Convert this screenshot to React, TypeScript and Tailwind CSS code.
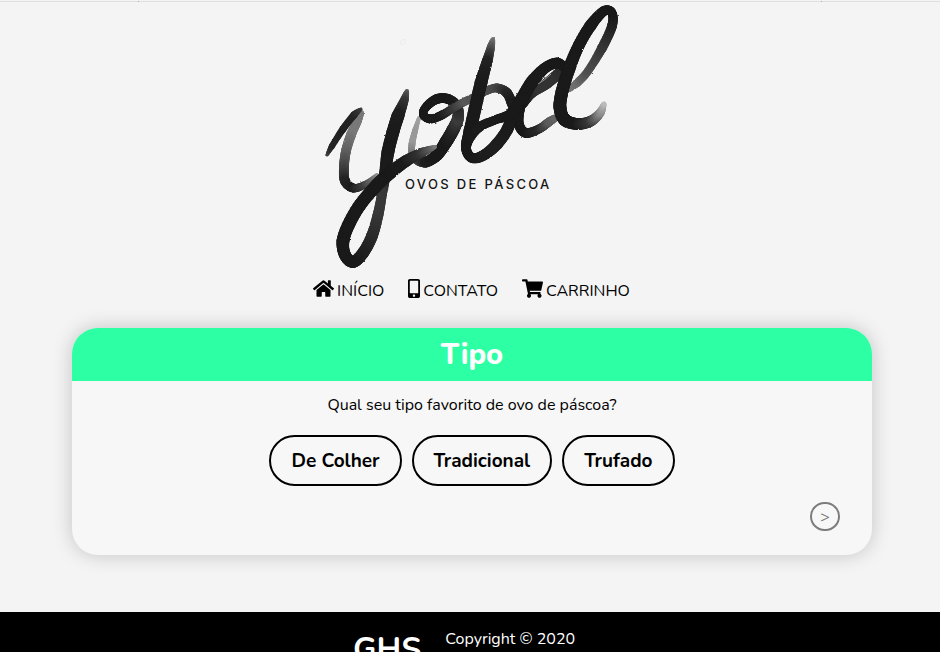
import React from "react";
import { FaHome, FaMobileAlt, FaShoppingCart } from "react-icons/fa";

// x, y, brush width, ink darkness (0 = paper, 1 = full ink)
type Dab = [number, number, number, number];

const strokes: Dab[][] = [
  // y: second arm and cup
  [[361, 112, 5, 0.5], [357, 121, 8, 0.5], [351, 134, 9, 0.5], [346, 150, 9, 0.6], [344, 166, 9, 0.75], [345, 180, 9, 0.92], [353, 187, 8, 0.97], [364, 184, 6, 0.8], [377, 174, 3, 0.4]],
  // y: first arm
  [[327, 154, 2, 0.75], [332, 145, 5, 0.92], [343, 128, 6, 0.95], [354, 114, 6, 0.92], [361, 108, 2, 0.8]],
  // o: faint left side into the base
  [[419, 117, 3, 0.3], [415, 130, 5, 0.35], [412, 143, 6, 0.35], [412, 154, 6, 0.5], [417, 160, 6, 0.75], [426, 161, 10, 0.95], [437, 154, 11, 0.98], [446, 141, 12, 0.98], [453, 129, 12, 0.93], [458, 117, 11, 0.8], [457, 105, 9, 0.9], [448, 98, 9, 0.97], [437, 98, 9, 0.98], [427, 105, 8, 0.98], [423, 113, 7, 0.98], [430, 118, 8, 0.98], [442, 114, 8, 0.97], [455, 106, 7, 0.8], [466, 100, 7, 0.65], [477, 95, 7, 0.7]],
  // y: stem, descender loop and exit
  [[407, 90, 3, 0.6], [404, 100, 8, 0.82], [398, 115, 12, 0.95], [393, 131, 12, 0.97], [388, 151, 12, 0.98], [385, 173, 11, 0.97], [382, 193, 9, 0.82], [378, 214, 10, 0.82], [372, 235, 11, 0.88], [363, 252, 11, 0.94], [353, 261, 11, 0.97], [345, 254, 11, 0.98], [343, 240, 12, 0.98], [349, 223, 12, 0.98], [360, 204, 12, 0.98], [376, 185, 12, 0.98], [390, 172, 12, 0.98], [406, 160, 11, 0.97], [421, 152, 9, 0.85], [435, 146, 3, 0.5]],
  // b: bowl top
  [[477, 96, 6, 0.7], [486, 90, 7, 0.7], [497, 87, 8, 0.75], [507, 92, 9, 0.9], [512, 103, 9, 0.97]],
  // e: inner eye
  [[565, 66, 8, 0.96], [558, 73, 10, 0.88], [546, 83, 10, 0.85], [532, 92, 9, 0.85], [523, 103, 8, 0.97]],
  // e: tail
  [[523, 97, 10, 0.98], [519, 110, 10, 0.98], [519, 124, 9, 0.98], [526, 132, 9, 0.98], [539, 128, 8, 0.9], [549, 121, 8, 0.65], [555, 117, 6, 0.6]],
  // b: stem, bowl
  [[493, 38, 3, 0.45], [491, 46, 7, 0.65], [487, 61, 10, 0.93], [481, 82, 12, 0.97], [475, 108, 12, 0.98], [470, 130, 12, 0.98], [466, 147, 9, 0.98], [472, 157, 9, 0.98], [484, 154, 10, 0.96], [497, 143, 11, 0.95], [508, 127, 11, 0.97], [513, 109, 10, 0.98]],
  // b exit into e
  [[468, 141, 7, 0.98], [478, 127, 9, 0.97], [495, 119, 8, 0.97], [511, 113, 10, 0.98], [521, 99, 12, 0.98], [532, 81, 12, 0.98], [545, 67, 10, 0.97], [557, 62, 10, 0.98], [565, 67, 8, 0.98]],
  // l: faint rising side, loop, stem, tail
  [[568, 89, 4, 0.5], [577, 82, 7, 0.55], [588, 70, 7, 0.7], [602, 47, 9, 0.82], [612, 25, 9, 0.93], [612, 12, 8, 0.98], [604, 10, 9, 0.98], [591, 24, 11, 0.98], [579, 44, 11, 0.98], [569, 68, 12, 0.98], [562, 91, 12, 0.98], [560, 107, 12, 0.98], [565, 119, 12, 0.98], [578, 123, 11, 0.97], [591, 120, 10, 0.82], [600, 112, 8, 0.45], [604, 103, 4, 0.2]],
];

const spline = (a: number, b: number, c: number, d: number, t: number) =>
  0.5 * (2 * b + (c - a) * t + (2 * a - 5 * b + 4 * c - d) * t * t + (3 * b - a - 3 * c + d) * t * t * t);

const mix = (b: number, c: number, t: number) => b + (c - b) * t;

function Stroke({ dabs }: { dabs: Dab[] }) {
  const steps = 14;
  const marks: React.ReactNode[] = [];
  for (let i = 0; i < dabs.length - 1; i++) {
    const p0 = dabs[Math.max(0, i - 1)];
    const p1 = dabs[i];
    const p2 = dabs[i + 1];
    const p3 = dabs[Math.min(dabs.length - 1, i + 2)];
    for (let s = 0; s <= steps; s++) {
      const t = s / steps;
      const v = Math.round(244 - Math.pow(mix(p1[3], p2[3], t), 0.85) * 222);
      marks.push(
        <circle
          key={`${i}-${s}`}
          cx={spline(p0[0], p1[0], p2[0], p3[0], t)}
          cy={spline(p0[1], p1[1], p2[1], p3[1], t)}
          r={mix(p1[2], p2[2], t) / 2 + 0.4}
          fill={`rgb(${v},${v},${v})`}
        />,
      );
    }
  }
  return <g>{marks}</g>;
}

function Logo() {
  return (
    <svg viewBox="320 2 306 270" className="h-[270px] w-[306px]" role="img" aria-label="Yobel ovos de páscoa">
      <filter id="brush" x="-5%" y="-5%" width="110%" height="110%" colorInterpolationFilters="sRGB">
        <feTurbulence type="fractalNoise" baseFrequency="0.5" numOctaves="2" seed="4" result="grain" />
        <feDisplacementMap in="SourceGraphic" in2="grain" scale="2" xChannelSelector="R" yChannelSelector="G" />
        <feGaussianBlur stdDeviation="0.4" />
      </filter>
      <g filter="url(#brush)" transform="translate(1 1)">
        {strokes.map((dabs, i) => (
          <Stroke key={i} dabs={dabs} />
        ))}
      </g>
      <path d="M539 84 Q546 80 552 74" fill="none" stroke="#b5b5b5" strokeWidth="0.8" />
      <ellipse cx="404" cy="42" rx="2" ry="3" transform="rotate(35 404 42)" fill="none" stroke="#ececec" />
      <text x="406" y="189" fill="#151515" className="font-['Inter'] text-[13px] font-medium tracking-[0.18em]">
        OVOS DE PÁSCOA
      </text>
    </svg>
  );
}

function Choice({ children }: { children: React.ReactNode }) {
  return (
    <button type="button" className="h-[51px] rounded-[26px] border-2 border-black px-5 pt-px text-[19px] font-bold">
      {children}
    </button>
  );
}

export default function App() {
  return (
    <div className="flex h-screen flex-col overflow-hidden bg-[#f4f4f4] font-['Nunito','Lato',sans-serif] text-base text-black">
      <div className="mt-px bg-[#dfdfdf] pl-5">
        <div className="mx-auto h-px w-full max-w-[684px] border-x border-[#b0b0b0]" />
      </div>
      <header className="flex flex-col items-center pl-1">
        <Logo />
        <nav className="mt-1 flex h-7 items-center gap-6 pr-px">
          <a href="#inicio" className="flex items-start gap-[3px]">
            <FaHome className="h-[21px] w-[21px]" />
            <span className="mt-px">INÍCIO</span>
          </a>
          <a href="#contato" className="flex items-start gap-[3px]">
            <FaMobileAlt className="h-[21px] w-3" />
            <span className="mt-px">CONTATO</span>
          </a>
          <a href="#carrinho" className="flex items-start gap-[3px]">
            <FaShoppingCart className="h-[21px] w-[21px]" />
            <span className="mt-px">CARRINHO</span>
          </a>
        </nav>
      </header>

      <main className="flex shrink-0 justify-center pt-6 pb-[57px] pl-1">
        <section className="w-full max-w-[800px] overflow-hidden rounded-[26px] bg-[#f7f7f7] shadow-[0_0_20px_rgba(0,0,0,0.2)]">
          <h1 className="h-[53px] bg-[#2dffa5] text-center text-[29px] leading-[53px] font-extrabold text-white">Tipo</h1>
          <p className="mt-3 text-center leading-6">Qual seu tipo favorito de ovo de páscoa?</p>
          <div className="mt-[18px] flex justify-center gap-[10px]">
            <Choice>De Colher</Choice>
            <Choice>Tradicional</Choice>
            <Choice>Trufado</Choice>
          </div>
          <div className="mt-4 mb-6 flex justify-end pr-8">
            <button
              type="button"
              aria-label="Próximo"
              className="flex h-[29px] w-[30px] items-center justify-center rounded-full border-2 border-[#7c7c7c] text-base text-[#7c7c7c]"
            >
              &gt;
            </button>
          </div>
        </section>
      </main>

      <footer className="flex flex-1 shrink-0 items-start justify-center gap-6 bg-black pt-[15px] pr-3 text-white">
        <strong className="pt-[3px] text-[32px] leading-10 font-bold">GHS</strong>
        <p className="leading-6">Copyright © 2020</p>
      </footer>
    </div>
  );
}
